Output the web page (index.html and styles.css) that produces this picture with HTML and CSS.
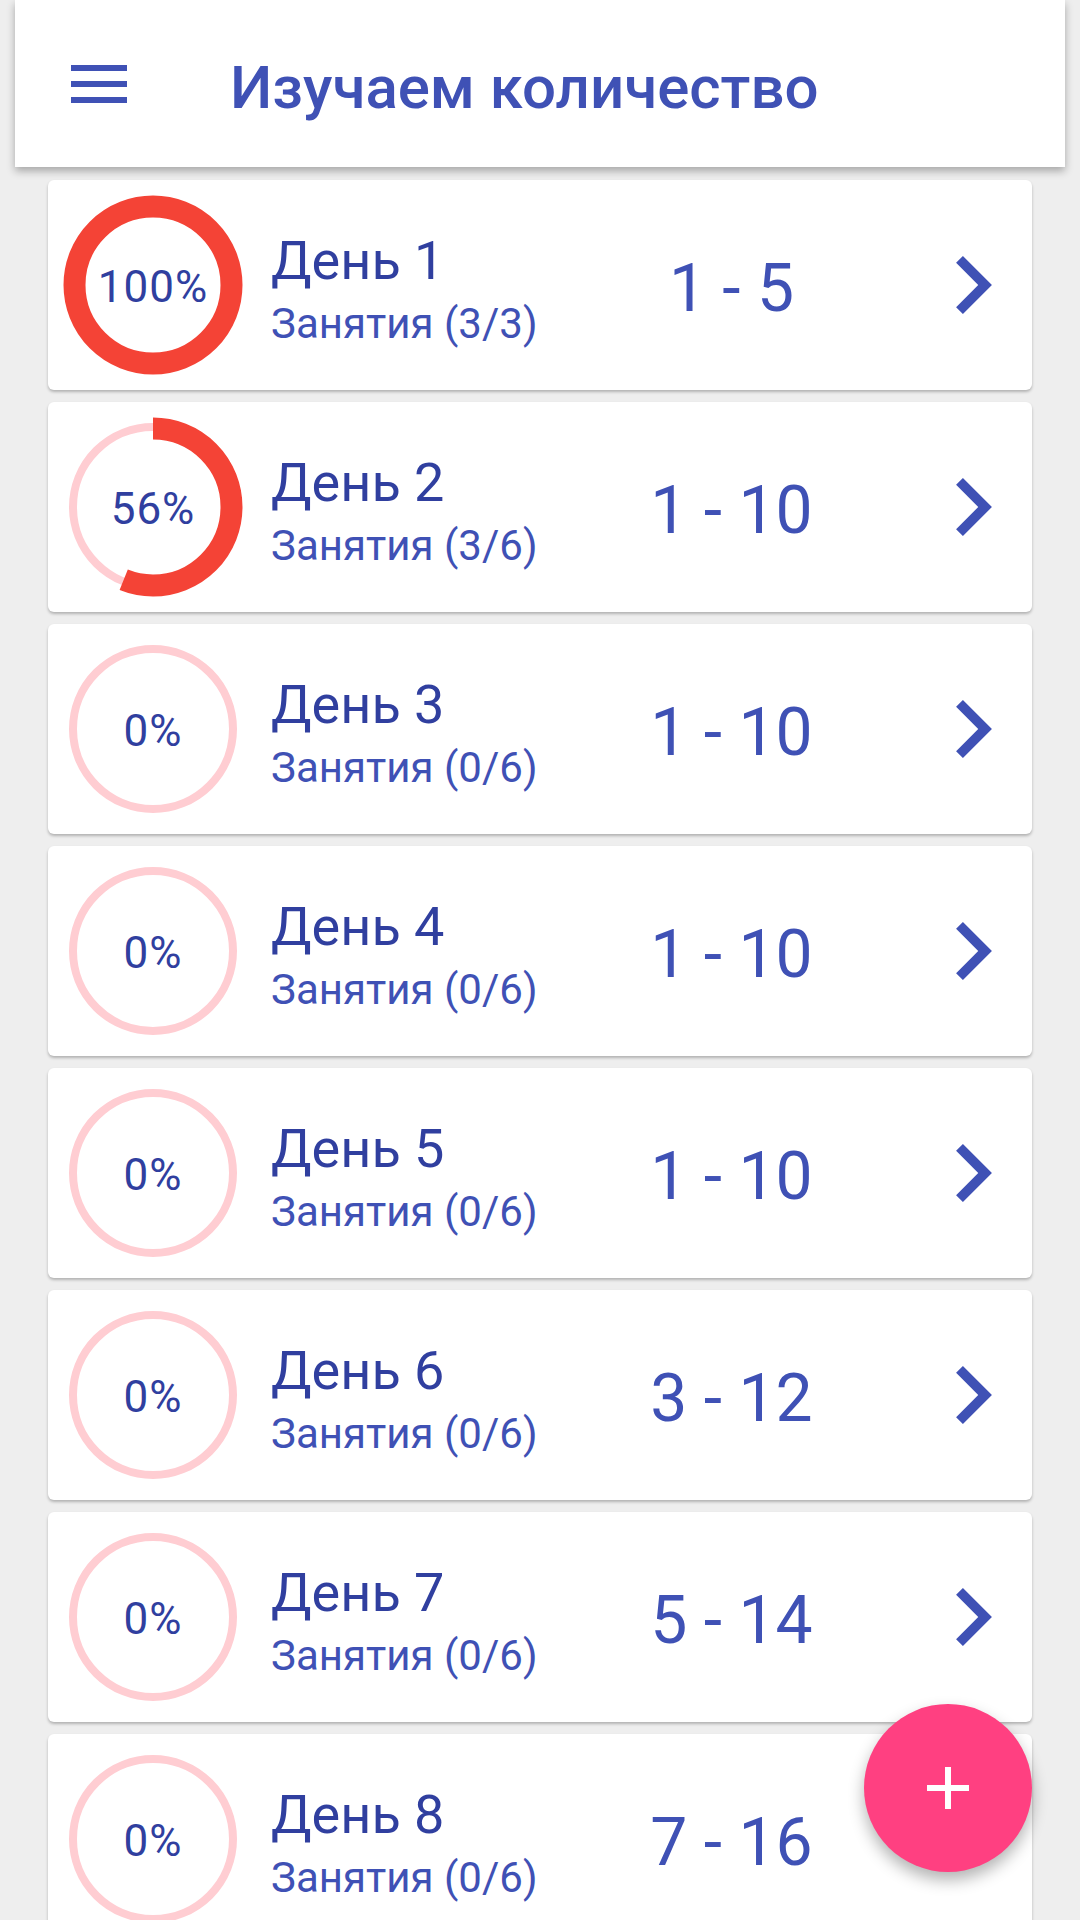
FILE: index.html
```html
<!DOCTYPE html>
<html lang="ru">
<head>
    <meta charset="UTF-8">
    <meta name="viewport" content="width=device-width, initial-scale=1.0">
    <title>Изучаем количество</title>
    <link rel="stylesheet" href="styles.css">
</head>
<body>

    <header class="toolbar">
        <button class="menu-btn" aria-label="Меню">
            <span></span><span></span><span></span>
        </button>
        <h1>Изучаем количество</h1>
    </header>

    <div class="day-list">
        <div class="day-card">
            <div class="progress">
                <svg viewBox="0 0 180 180">
                    <circle class="track" cx="90" cy="90" r="80"/>
                    <circle class="bar" cx="90" cy="90" r="78.5" stroke-dasharray="493.2 493.2"/>
                </svg>
                <span class="percent">100%</span>
            </div>
            <div class="day-info">
                <div class="day-title">День 1</div>
                <div class="day-lessons">Занятия (3/3)</div>
            </div>
            <div class="day-range">1 - 5</div>
            <svg class="chevron" viewBox="8.59 6 7.41 12"><path d="M10 6L8.59 7.41 13.17 12l-4.58 4.59L10 18l6-6z"/></svg>
        </div>

        <div class="day-card">
            <div class="progress">
                <svg viewBox="0 0 180 180">
                    <circle class="track" cx="90" cy="90" r="80"/>
                    <circle class="bar" cx="90" cy="90" r="78.5" stroke-dasharray="276.2 493.2"/>
                </svg>
                <span class="percent">56%</span>
            </div>
            <div class="day-info">
                <div class="day-title">День 2</div>
                <div class="day-lessons">Занятия (3/6)</div>
            </div>
            <div class="day-range">1 - 10</div>
            <svg class="chevron" viewBox="8.59 6 7.41 12"><path d="M10 6L8.59 7.41 13.17 12l-4.58 4.59L10 18l6-6z"/></svg>
        </div>

        <div class="day-card">
            <div class="progress">
                <svg viewBox="0 0 180 180">
                    <circle class="track" cx="90" cy="90" r="80"/>
                </svg>
                <span class="percent">0%</span>
            </div>
            <div class="day-info">
                <div class="day-title">День 3</div>
                <div class="day-lessons">Занятия (0/6)</div>
            </div>
            <div class="day-range">1 - 10</div>
            <svg class="chevron" viewBox="8.59 6 7.41 12"><path d="M10 6L8.59 7.41 13.17 12l-4.58 4.59L10 18l6-6z"/></svg>
        </div>

        <div class="day-card">
            <div class="progress">
                <svg viewBox="0 0 180 180">
                    <circle class="track" cx="90" cy="90" r="80"/>
                </svg>
                <span class="percent">0%</span>
            </div>
            <div class="day-info">
                <div class="day-title">День 4</div>
                <div class="day-lessons">Занятия (0/6)</div>
            </div>
            <div class="day-range">1 - 10</div>
            <svg class="chevron" viewBox="8.59 6 7.41 12"><path d="M10 6L8.59 7.41 13.17 12l-4.58 4.59L10 18l6-6z"/></svg>
        </div>

        <div class="day-card">
            <div class="progress">
                <svg viewBox="0 0 180 180">
                    <circle class="track" cx="90" cy="90" r="80"/>
                </svg>
                <span class="percent">0%</span>
            </div>
            <div class="day-info">
                <div class="day-title">День 5</div>
                <div class="day-lessons">Занятия (0/6)</div>
            </div>
            <div class="day-range">1 - 10</div>
            <svg class="chevron" viewBox="8.59 6 7.41 12"><path d="M10 6L8.59 7.41 13.17 12l-4.58 4.59L10 18l6-6z"/></svg>
        </div>

        <div class="day-card">
            <div class="progress">
                <svg viewBox="0 0 180 180">
                    <circle class="track" cx="90" cy="90" r="80"/>
                </svg>
                <span class="percent">0%</span>
            </div>
            <div class="day-info">
                <div class="day-title">День 6</div>
                <div class="day-lessons">Занятия (0/6)</div>
            </div>
            <div class="day-range">3 - 12</div>
            <svg class="chevron" viewBox="8.59 6 7.41 12"><path d="M10 6L8.59 7.41 13.17 12l-4.58 4.59L10 18l6-6z"/></svg>
        </div>

        <div class="day-card">
            <div class="progress">
                <svg viewBox="0 0 180 180">
                    <circle class="track" cx="90" cy="90" r="80"/>
                </svg>
                <span class="percent">0%</span>
            </div>
            <div class="day-info">
                <div class="day-title">День 7</div>
                <div class="day-lessons">Занятия (0/6)</div>
            </div>
            <div class="day-range">5 - 14</div>
            <svg class="chevron" viewBox="8.59 6 7.41 12"><path d="M10 6L8.59 7.41 13.17 12l-4.58 4.59L10 18l6-6z"/></svg>
        </div>

        <div class="day-card">
            <div class="progress">
                <svg viewBox="0 0 180 180">
                    <circle class="track" cx="90" cy="90" r="80"/>
                </svg>
                <span class="percent">0%</span>
            </div>
            <div class="day-info">
                <div class="day-title">День 8</div>
                <div class="day-lessons">Занятия (0/6)</div>
            </div>
            <div class="day-range">7 - 16</div>
            <svg class="chevron" viewBox="8.59 6 7.41 12"><path d="M10 6L8.59 7.41 13.17 12l-4.58 4.59L10 18l6-6z"/></svg>
        </div>
    </div>

    <button class="fab" aria-label="Добавить">
        <svg viewBox="0 0 24 24"><path d="M19 13h-6v6h-2v-6H5v-2h6V5h2v6h6v2z"/></svg>
    </button>

</body>
</html>
```

FILE: styles.css
```css
body {
    font-family: Roboto, "Noto Sans", sans-serif;
    background-color: #eeeeee;
    margin: 0;
    padding: 0;
    height: 1920px;
    overflow: hidden;
}

.toolbar {
    position: relative;
    z-index: 2;
    margin: 0 15px;
    height: 167px;
    background-color: #ffffff;
    display: flex;
    align-items: center;
    padding-left: 56px;
    box-shadow: 0 4px 8px rgba(0, 0, 0, 0.3);
}

.menu-btn {
    width: 56px;
    height: 38px;
    padding: 0;
    border: none;
    background: transparent;
    display: flex;
    flex-direction: column;
    justify-content: space-between;
}

.menu-btn span {
    display: block;
    width: 56px;
    height: 6px;
    background-color: #3f51b5;
}

.toolbar h1 {
    margin: 0 0 0 103px;
    padding-top: 8px;
    font-size: 60px;
    font-weight: 500;
    color: #3f51b5;
}

.day-list {
    display: flex;
    flex-direction: column;
    gap: 12px;
    padding: 13px 48px;
}

.day-card {
    height: 210px;
    flex-shrink: 0;
    background-color: #ffffff;
    border-radius: 6px;
    box-shadow: 0 2px 3px rgba(0, 0, 0, 0.25);
    display: flex;
    align-items: center;
    padding: 0 40px 0 15px;
}

.progress {
    position: relative;
    width: 180px;
    height: 180px;
    flex-shrink: 0;
    margin-right: 28px;
    display: flex;
    align-items: center;
    justify-content: center;
}

.progress svg {
    position: absolute;
    top: 0;
    left: 0;
    width: 180px;
    height: 180px;
    transform: rotate(-90deg);
}

.progress .track {
    fill: none;
    stroke: #ffcdd2;
    stroke-width: 8;
}

.progress .bar {
    fill: none;
    stroke: #f44336;
    stroke-width: 22;
}

.percent {
    position: relative;
    padding-top: 3px;
    font-size: 44px;
    letter-spacing: 1px;
    color: #303f9f;
}

.day-info {
    width: 265px;
    flex-shrink: 0;
}

.day-title {
    font-size: 54px;
    line-height: 77px;
    color: #303f9f;
}

.day-lessons {
    font-size: 42px;
    line-height: 50px;
    color: #3f51b5;
    white-space: nowrap;
}

.day-range {
    flex: 1;
    text-align: center;
    padding-top: 7px;
    font-size: 66px;
    color: #3f51b5;
}

.chevron {
    width: 36px;
    height: 58px;
    margin-left: 29px;
    flex-shrink: 0;
    fill: #3f51b5;
}

.fab {
    position: fixed;
    right: 48px;
    bottom: 48px;
    width: 168px;
    height: 168px;
    border: none;
    border-radius: 50%;
    background-color: #ff4081;
    box-shadow: 0 8px 16px rgba(0, 0, 0, 0.3);
    display: flex;
    align-items: center;
    justify-content: center;
    padding: 0;
}

.fab svg {
    width: 72px;
    height: 72px;
    fill: #ffffff;
}
```
